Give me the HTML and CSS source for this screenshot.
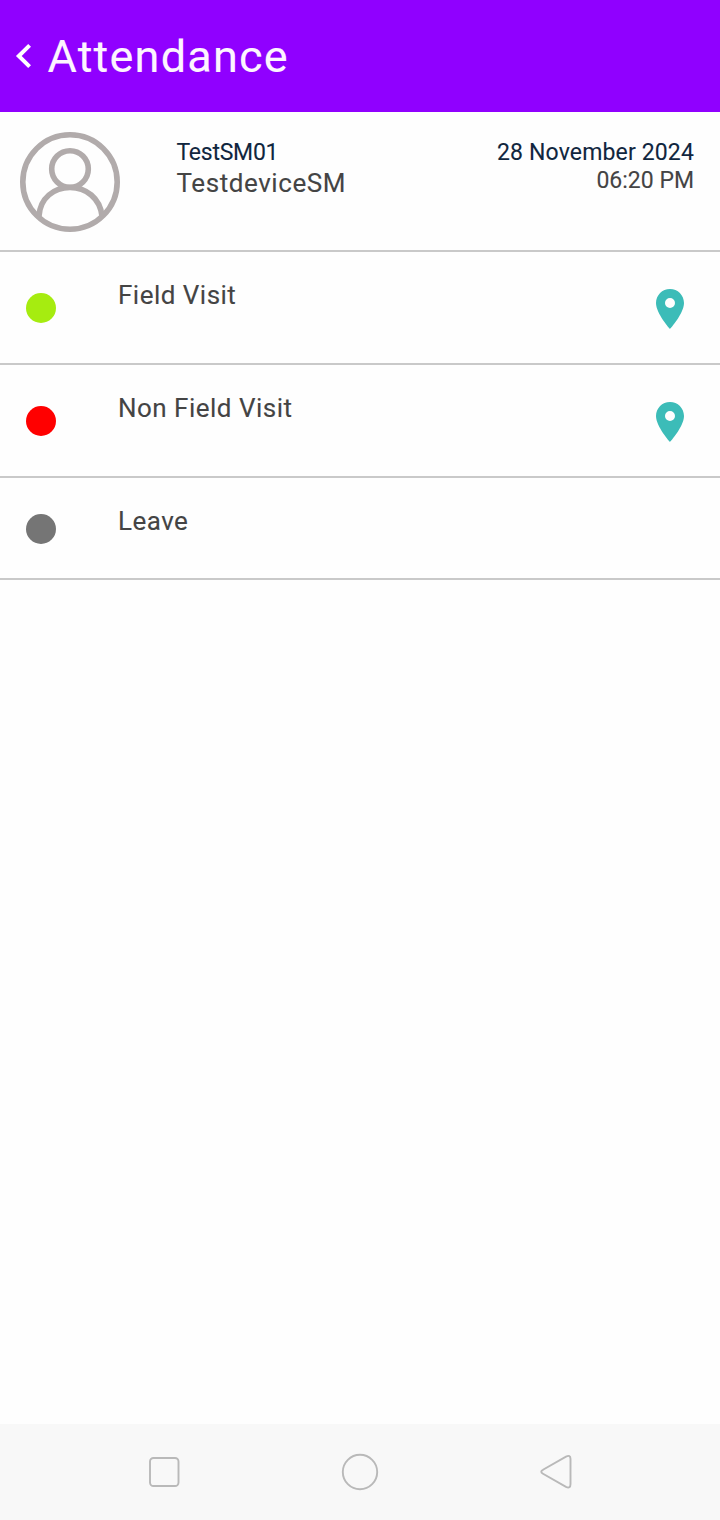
FILE: index.html
```html
<!DOCTYPE html>
<html lang="en">
<head>
<meta charset="utf-8">
<title>Attendance</title>
<link rel="stylesheet" href="styles.css">
</head>
<body>
<div class="screen">
  <header class="app-bar">
    <svg class="back" viewBox="0 0 20 28"><path d="M17.600 3.400 6.800 14l10.800 10.600"/></svg>
    <h1 class="title">Attendance</h1>
  </header>
  <section class="profile">
    <svg class="avatar" viewBox="0 0 100 100"><circle cx="50" cy="50" r="47.2"/><circle cx="50" cy="37" r="18.3"/><path d="M19 84C20 66 34 55.500 50 55.500S80 66 82 84"/></svg>
    <div class="who"><div class="user">TestSM01</div><div class="device">TestdeviceSM</div></div>
    <div class="when"><div class="date">28 November 2024</div><div class="time">06:20 PM</div></div>
  </section>
  <main class="list">
    <div class="row">
      <span class="dot green"></span><span class="label">Field Visit</span>
      <svg class="pin" viewBox="0 0 24 24"><path fill-rule="evenodd" d="M12 2C8.100 2 5 5.100 5 9c0 5.250 7 13 7 13s7-7.750 7-13c0-3.900-3.100-7-7-7zm0 9.500a2.500 2.500 0 1 1 0-5 2.500 2.500 0 0 1 0 5z"/></svg>
    </div>
    <div class="row">
      <span class="dot red"></span><span class="label">Non Field Visit</span>
      <svg class="pin" viewBox="0 0 24 24"><path fill-rule="evenodd" d="M12 2C8.100 2 5 5.100 5 9c0 5.250 7 13 7 13s7-7.750 7-13c0-3.900-3.100-7-7-7zm0 9.500a2.500 2.500 0 1 1 0-5 2.500 2.500 0 0 1 0 5z"/></svg>
    </div>
    <div class="row short">
      <span class="dot gray"></span><span class="label">Leave</span>
    </div>
  </main>
  <nav class="nav-bar">
    <svg class="key" viewBox="0 0 40 40"><rect x="6" y="6" width="28.500" height="28" rx="3.500"/></svg>
    <svg class="key" viewBox="0 0 40 40"><circle cx="20" cy="20" r="17.200"/></svg>
    <svg class="key" viewBox="0 0 40 40"><path d="M7 17.800 30 4.600Q34.500 2.500 34.500 7V32Q34.500 37 30 34.900L7 21.700Q3.500 19.700 7 17.800Z"/></svg>
  </nav>
</div>
</body>
</html>
```
FILE: styles.css
```css
* { box-sizing: border-box; }
body { margin: 0; font-family: Roboto, "Liberation Sans", sans-serif; background: #fefefe; color: #444; -webkit-text-stroke: 0.1px currentColor; }
.screen { width: 720px; height: 1520px; display: flex; flex-direction: column; }
.app-bar { height: 112px; background: #9000ff; display: flex; align-items: center; padding-left: 12px; color: #fdf4ff; }
.back { width: 20px; height: 28px; fill: none; stroke: #fff; stroke-width: 4; }
.title { margin: 1px 0 0 15.500px; font-size: 45px; font-weight: 400; line-height: 60px; letter-spacing: 1.2px; }
.profile { height: 140px; border-bottom: 2px solid #c9c9c9; display: flex; padding: 20px 26px 0 20px; }
.avatar { width: 100px; height: 100px; fill: none; stroke: #b1abab; stroke-width: 5.6; }
.who { margin: 7px 0 0 56.500px; }
.when { margin: 7px 0 0 auto; text-align: right; }
.user, .date, .time { font-size: 23px; line-height: 28px; white-space: nowrap; }
.user, .date { color: #10263e; }
.user { letter-spacing: -0.25px; }
.date { letter-spacing: 0.15px; }
.device { font-size: 26px; line-height: 32px; letter-spacing: 0.57px; }
.row { height: 113px; border-bottom: 2px solid #c9c9c9; display: flex; align-items: flex-start; padding: 0 26px; }
.row.short { height: 102px; }
.dot { width: 30px; height: 30px; border-radius: 50%; margin-top: 41px; }
.short .dot { margin-top: 36px; }
.green { background: #a6ec10; }
.red { background: #f00; }
.gray { background: #757575; }
.label { margin: 28px 0 0 62px; font-size: 26px; line-height: 30px; letter-spacing: 0.48px; }
.pin { width: 48px; height: 48px; margin: 33px 0 0 auto; fill: #3cbcb8; }
.nav-bar { height: 96px; margin-top: auto; background: #f8f8f8; display: flex; align-items: center; justify-content: space-between; padding: 0 144px; }
.key { width: 40px; height: 40px; fill: none; stroke: #b9b9b9; stroke-width: 1.900; }
```
